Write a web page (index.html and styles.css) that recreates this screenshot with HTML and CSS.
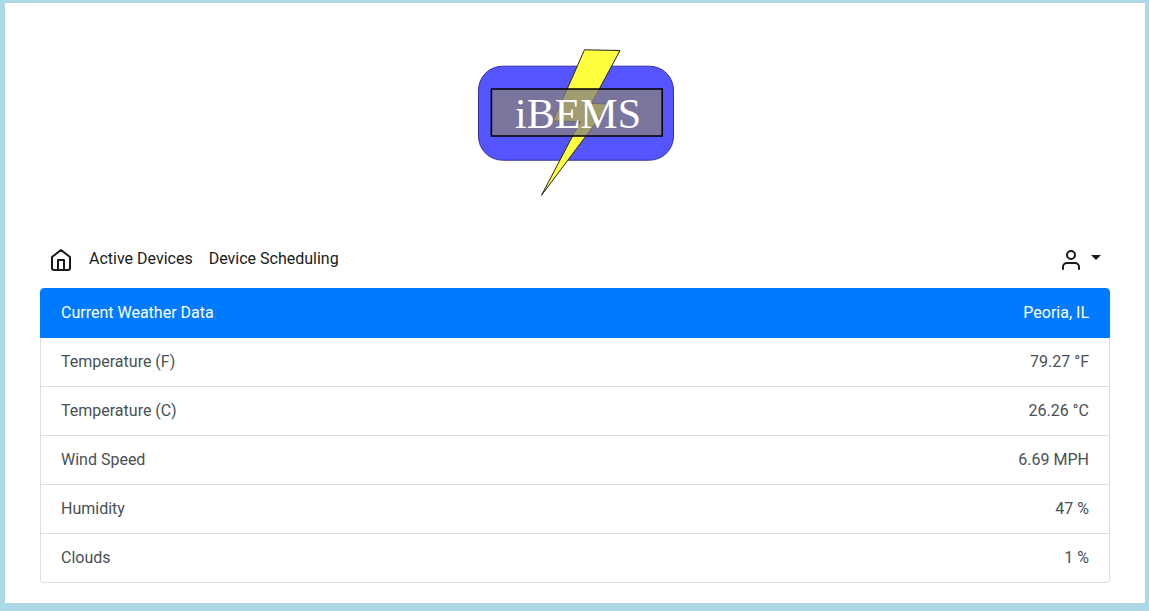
FILE: index.html
```html
<!DOCTYPE html>
<html lang="en">
<head>
<meta charset="utf-8">
<title>iBEMS</title>
<meta name="viewport" content="width=device-width, initial-scale=1">
<link rel="stylesheet" href="styles.css">
</head>
<body>
<div class="page">
  <header class="banner">
    <svg class="logo" viewBox="0 0 200 150" role="img" aria-label="iBEMS">
      <rect class="logo-body" x="3.5" y="18.2" width="195" height="94" rx="24"/>
      <polygon class="logo-bolt" points="109.5,1.8 145,2.5 116.5,55.5 135,56 66.5,147.3 105.2,73.5 78,73"/>
      <rect class="logo-plate" x="16.4" y="41" width="170.8" height="47"/>
      <text class="logo-text" x="103" y="80" text-anchor="middle">iBEMS</text>
    </svg>
  </header>
  <nav class="nav">
    <a class="nav-home" href="#" aria-label="Home">
      <svg class="icon" viewBox="0 0 24 24"><path d="M3 9l9-7 9 7v11a2 2 0 0 1-2 2H5a2 2 0 0 1-2-2z"/><polyline points="9 22 9 12 15 12 15 22"/></svg>
    </a>
    <a class="nav-link" href="#">Active Devices</a>
    <a class="nav-link" href="#">Device Scheduling</a>
    <button class="account" type="button" aria-label="Account" aria-haspopup="true">
      <svg class="icon" viewBox="0 0 24 24"><path d="M20 21v-2a4 4 0 0 0-4-4H8a4 4 0 0 0-4 4v2"/><circle cx="12" cy="7" r="4"/></svg>
      <span class="caret"></span>
    </button>
  </nav>
  <main>
    <ul class="list">
      <li class="item item-active"><span>Current Weather Data</span><span>Peoria, IL</span></li>
      <li class="item"><span>Temperature (F)</span><span>79.27 °F</span></li>
      <li class="item"><span>Temperature (C)</span><span>26.26 °C</span></li>
      <li class="item"><span>Wind Speed</span><span>6.69 MPH</span></li>
      <li class="item"><span>Humidity</span><span>47 %</span></li>
      <li class="item"><span>Clouds</span><span>1 %</span></li>
    </ul>
  </main>
</div>
</body>
</html>
```
FILE: styles.css
```css
* {
  box-sizing: border-box;
}

body {
  margin: 0;
  padding: 3px 4px 8px 5px;
  background: #add8e6;
  color: #212529;
  font: 16px/24px Roboto, sans-serif;
}

.page {
  padding: 45px 35px 20px;
  background: #fff;
}

.banner {
  display: flex;
  justify-content: center;
  padding-bottom: 41px;
}

.logo {
  width: 200px;
  height: 150px;
}

.logo-body {
  fill: #5555ff;
  stroke: #333399;
}

.logo-bolt {
  fill: #ffff3f;
  stroke: #222;
}

.logo-plate {
  fill: #858080;
  fill-opacity: 0.77;
  stroke: #000;
  stroke-width: 1.5;
}

.logo-text {
  fill: #fff;
  font: 42px "Liberation Serif", serif;
}

.nav {
  display: flex;
  align-items: center;
  padding: 0 9px 9px;
}

.nav-home {
  display: flex;
  margin: 2px 8px 0 0;
}

.nav-link {
  padding: 8px;
  color: #1a1a1a;
  text-decoration: none;
}

.icon {
  display: block;
  width: 24px;
  height: 24px;
  fill: none;
  stroke: #1a1a1a;
  stroke-width: 2;
  stroke-linecap: round;
  stroke-linejoin: round;
}

.account {
  display: flex;
  align-items: center;
  gap: 8px;
  margin: 2px 0 0 auto;
  padding: 0;
  border: 0;
  background: none;
}

.caret {
  margin-bottom: 6px;
  border-top: 5px solid #1a1a1a;
  border-right: 5px solid transparent;
  border-left: 5px solid transparent;
}

.list {
  margin: 0;
  padding: 0;
  list-style: none;
}

.item {
  display: flex;
  justify-content: space-between;
  padding: 12px 20px;
  border: 1px solid #dfdfdf;
  border-top: 0;
  color: #495057;
}

.item:last-child {
  border-radius: 0 0 4px 4px;
}

.item-active {
  border: 1px solid #007bff;
  border-radius: 4px 4px 0 0;
  background: #007bff;
  color: #fff;
}
```
